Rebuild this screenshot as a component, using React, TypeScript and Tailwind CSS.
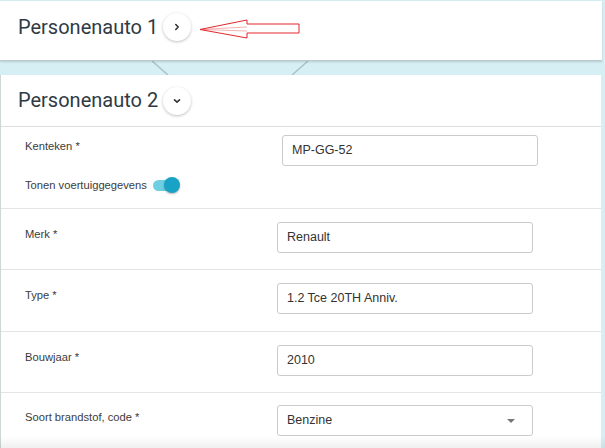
import React from "react";

const headFont = { fontFamily: "Roboto, 'Liberation Sans', sans-serif" };
const labelFont = { fontFamily: "'Liberation Sans', Arial, sans-serif" };

function Chevron({ down }: { down?: boolean }) {
  return (
    <div className="w-[28px] h-[28px] rounded-full bg-white shadow-[0_1px_3px_rgba(0,0,0,0.25)] flex items-center justify-center">
      <svg width="10" height="10" viewBox="0 0 10 10">
        {down ? (
          <path d="M2.5 3.8 L5 6.2 L7.5 3.8" fill="none" stroke="#333" strokeWidth="1.6" strokeLinecap="round" strokeLinejoin="round" />
        ) : (
          <path d="M3.8 2.5 L6.2 5 L3.8 7.5" fill="none" stroke="#333" strokeWidth="1.6" strokeLinecap="round" strokeLinejoin="round" />
        )}
      </svg>
    </div>
  );
}

function Row({
  label,
  value,
  h,
  inputX,
  inputTop,
  labelTop,
  select,
  children,
  last,
}: {
  label: string;
  value: string;
  h: string;
  inputX: string;
  inputTop: string;
  labelTop: string;
  select?: boolean;
  children?: React.ReactNode;
  last?: boolean;
}) {
  return (
    <div className={`${h} flex ${last ? "" : "border-b border-[#e2e4e5]"}`}>
      <div className={`w-[260px] pl-[24px] ${labelTop} flex flex-col`}>
        <div className="text-[11.2px] text-[#3c3c3c] leading-[14px]" style={labelFont}>
          {label}
        </div>
        {children}
      </div>
      <div className={`${inputX} ${inputTop}`}>
        <div className="w-[256px] h-[31px] border border-[#c9cccf] rounded-[3px] bg-white flex items-center pl-[9px] pr-[16px] justify-between">
          <span className="text-[12.5px] text-[#333]" style={labelFont}>
            {value}
          </span>
          {select && (
            <svg width="10" height="6" viewBox="0 0 10 6">
              <path d="M1 1 L9 1 L5 5 Z" fill="#777" />
            </svg>
          )}
        </div>
      </div>
    </div>
  );
}

export default function App() {
  return (
    <div className="w-[605px] h-[448px] bg-[#d5eff4] overflow-hidden relative">
      {/* Top card */}
      <div className="h-[60px] mt-[1px] mr-[3px] bg-white border-b border-[#b9cbcf] shadow-[0_1px_2px_rgba(0,0,0,0.15)] flex items-center pl-[18px] gap-[5px] relative z-10">
        <span className="text-[20px] text-[#2f3a44] pb-[7px]" style={headFont}>
          Personenauto 1
        </span>
        <div className="mb-[7px]">
          <Chevron />
        </div>
        <svg width="110" height="24" viewBox="0 0 110 24" className="ml-[3px] mb-[2px]">
          <polygon
            points="1,11.5 48,2 48,6 100,6 100,15 48,15 48,20"
            fill="none"
            stroke="#e3262b"
            strokeWidth="1"
          />
          <path d="M1 11.5 L48 9 M1 11.5 L48 13" stroke="#e3262b" strokeWidth="0.6" fill="none" opacity="0.6" />
        </svg>
      </div>
      {/* Band */}
      <div className="h-[14px] relative">
        <svg className="absolute inset-0" width="605" height="14" viewBox="0 0 605 14">
          <path d="M152 0 L168 14" stroke="#a9c3c8" strokeWidth="1.5" />
          <path d="M308 0 L292 14" stroke="#a9c3c8" strokeWidth="1.5" />
        </svg>
      </div>
      {/* Second card */}
      <div className="mr-[4px] bg-white border-l border-[#cfd6d8]">
        <div className="h-[52px] border-b border-[#dcdfe0] flex items-center pl-[17px] gap-[5px]">
          <span className="text-[20px] text-[#2f3a44] pb-[1px]" style={headFont}>
            Personenauto 2
          </span>
          <Chevron down />
        </div>
        <Row label="Kenteken *" value="MP-GG-52" h="h-[82px]" inputX="pl-[21px]" inputTop="pt-[8px]" labelTop="pt-[12px]">
          <div className="flex items-center gap-[6px] mt-[24px]">
            <span className="text-[11.2px] text-[#3c3c3c]" style={labelFont}>
              Tonen voertuiggegevens
            </span>
            <div className="relative w-[27px] h-[16px] flex items-center">
              <div className="w-[21px] h-[11px] rounded-full bg-[#6fcfe2]" />
              <div className="absolute right-0 w-[16px] h-[16px] rounded-full bg-[#17a2c6] shadow-[0_1px_2px_rgba(0,0,0,0.3)]" />
            </div>
          </div>
        </Row>
        <Row label="Merk *" value="Renault" h="h-[61px]" inputX="pl-[16px]" inputTop="pt-[13px]" labelTop="pt-[18px]" />
        <Row label="Type *" value="1.2 Tce 20TH Anniv." h="h-[62px]" inputX="pl-[16px]" inputTop="pt-[13px]" labelTop="pt-[18px]" />
        <Row label="Bouwjaar *" value="2010" h="h-[61px]" inputX="pl-[16px]" inputTop="pt-[13px]" labelTop="pt-[18px]" />
        <Row label="Soort brandstof, code *" value="Benzine" h="h-[60px]" inputX="pl-[16px]" inputTop="pt-[12px]" labelTop="pt-[17px]" select last />
      </div>
      <div className="absolute left-0 right-0 bottom-0 h-[12px] bg-gradient-to-b from-transparent to-[rgba(0,0,0,0.06)] pointer-events-none" />
    </div>
  );
}
